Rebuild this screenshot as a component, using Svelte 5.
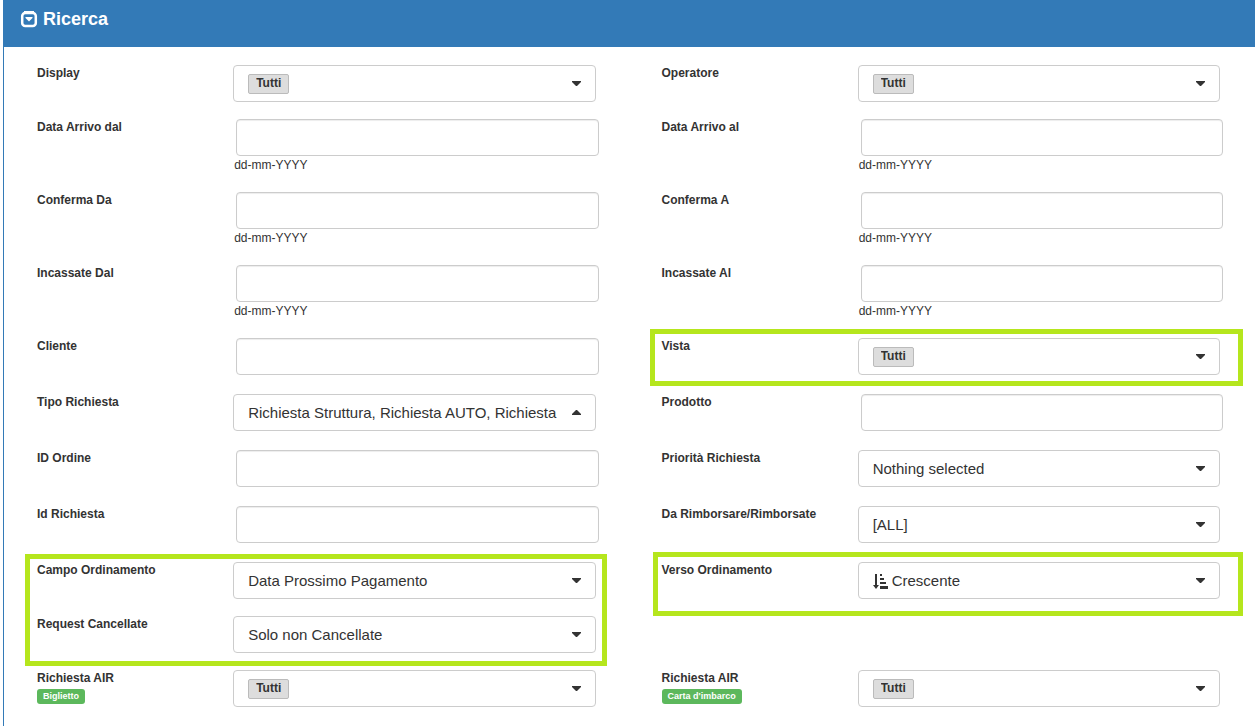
<script>
  const rows = [
    [
      { id: 'display', label: 'Display', kind: 'tag', value: 'Tutti' },
      { id: 'operatore', label: 'Operatore', kind: 'tag', value: 'Tutti' }
    ],
    [
      { id: 'arrivo-dal', label: 'Data Arrivo dal', kind: 'date' },
      { id: 'arrivo-al', label: 'Data Arrivo al', kind: 'date' }
    ],
    [
      { id: 'conferma-da', label: 'Conferma Da', kind: 'date' },
      { id: 'conferma-a', label: 'Conferma A', kind: 'date' }
    ],
    [
      { id: 'incassate-dal', label: 'Incassate Dal', kind: 'date' },
      { id: 'incassate-al', label: 'Incassate Al', kind: 'date' }
    ],
    [
      { id: 'cliente', label: 'Cliente', kind: 'text' },
      { id: 'vista', label: 'Vista', kind: 'tag', value: 'Tutti', mark: 'mark-vista' }
    ],
    [
      { id: 'tipo', label: 'Tipo Richiesta', kind: 'select', value: 'Richiesta Struttura, Richiesta AUTO, Richiesta', open: true },
      { id: 'prodotto', label: 'Prodotto', kind: 'text' }
    ],
    [
      { id: 'id-ordine', label: 'ID Ordine', kind: 'text' },
      { id: 'priorita', label: 'Priorità Richiesta', kind: 'select', value: 'Nothing selected' }
    ],
    [
      { id: 'id-richiesta', label: 'Id Richiesta', kind: 'text' },
      { id: 'rimborsi', label: 'Da Rimborsare/Rimborsate', kind: 'select', value: '[ALL]' }
    ],
    [
      { id: 'campo', label: 'Campo Ordinamento', kind: 'select', value: 'Data Prossimo Pagamento', mark: 'mark-campo' },
      { id: 'verso', label: 'Verso Ordinamento', kind: 'select', value: 'Crescente', sort: true, mark: 'mark-verso' }
    ],
    [{ id: 'cancellate', label: 'Request Cancellate', kind: 'select', value: 'Solo non Cancellate' }],
    [
      { id: 'air-biglietto', label: 'Richiesta AIR', badge: 'Biglietto', kind: 'tag', value: 'Tutti' },
      { id: 'air-carta', label: 'Richiesta AIR', badge: "Carta d'imbarco", kind: 'tag', value: 'Tutti' }
    ]
  ];
</script>

<section class="panel">
  <header>
    <svg width="18" height="18" viewBox="0 0 18 18" aria-hidden="true">
      <path d="M4 1h10v2H4z" fill="#fff" />
      <rect x="2.200" y="3" width="13.600" height="13" rx="3" fill="none" stroke="#fff" stroke-width="2.500" />
      <path d="M5.500 7h7v1L9 11.500 5.500 8z" fill="#fff" />
    </svg>
    <h1>Ricerca</h1>
  </header>

  <form>
    {#each rows as row}
      <div class="pair">
        {#each row as f}
          <div class="field">
            <label for={f.id}>
              {f.label}
              {#if f.badge}<span class="badge">{f.badge}</span>{/if}
            </label>
            <div class="control">
              {#if f.kind === 'text' || f.kind === 'date'}
                <input id={f.id} type="text" />
                {#if f.kind === 'date'}<p class="help">dd-mm-YYYY</p>{/if}
              {:else}
                <div class="box">
                  {#if f.sort}
                    <svg class="sort" width="15" height="16" viewBox="0 0 15 16" aria-hidden="true">
                      <path d="M2 1h2v11h2L3 16 0 12h2z M7 1h2v2H7z M7 5h4v2H7z M7 9h6v2H7z M7 13h8v3H7z" fill="#333" />
                    </svg>
                  {/if}
                  <select id={f.id} class:tag={f.kind === 'tag'}>
                    <option>{f.value}</option>
                  </select>
                  <svg class="caret" width="9" height="5" viewBox="0 0 9 5" aria-hidden="true">
                    <path d={f.open ? 'M0 5V4l4-4h1l4 4v1z' : 'M0 0h9v1L5 5H4L0 1z'} fill="#333" />
                  </svg>
                </div>
              {/if}
            </div>
            {#if f.mark}<span class="mark {f.mark}"></span>{/if}
          </div>
        {/each}
      </div>
    {/each}
  </form>
</section>

<style>
  :global(body) {
    margin: 0;
    background: #fff;
    overflow-x: hidden;
  }
  .panel {
    margin-left: 3px;
    border-left: 1px solid #337ab7;
    font: 12px/19px "Liberation Sans", Arial, sans-serif;
    color: #333;
  }
  header {
    display: flex;
    align-items: center;
    gap: 5px;
    height: 37px;
    padding: 0 16px 10px;
    background: #337ab7;
    color: #fff;
  }
  h1 {
    margin: 0;
    font-size: 18px;
    line-height: 20px;
  }
  form {
    display: flex;
    flex-direction: column;
    gap: 17px;
    padding: 18px 20px 19px 18px;
  }
  .pair {
    display: grid;
    grid-template-columns: 1fr 1fr;
    gap: 36px;
  }
  .field {
    position: relative;
    display: grid;
    grid-template-columns: 1fr 2fr;
    align-items: start;
  }
  label {
    padding: 0 0 0 15px;
    font-weight: bold;
    line-height: 16px;
  }
  .badge {
    display: table;
    margin-top: 3px;
    padding: 0 6px;
    border-radius: 3px;
    background: #5cb85c;
    color: #fff;
    font-size: 9px;
    line-height: 15px;
  }
  .control {
    min-width: 0;
    padding: 0 15px;
  }
  input {
    display: block;
    box-sizing: border-box;
    width: 100%;
    height: 37px;
    margin: 0 0 2px 3px;
    padding: 6px 12px;
    border: 1px solid #ccc;
    border-radius: 4px;
    box-shadow: inset 0 1px 1px rgba(0, 0, 0, 0.075);
    background: #fff;
    font: inherit;
    color: inherit;
  }
  .help {
    margin: -2px 0 0 1px;
  }
  .box {
    display: flex;
    align-items: center;
    gap: 4px;
    box-sizing: border-box;
    height: 37px;
    padding: 0 14px;
    border: 1px solid #ccc;
    border-radius: 4px;
  }
  select {
    appearance: none;
    flex: 1;
    min-width: 0;
    margin: 0;
    padding: 0;
    border: 0;
    background: none;
    color: #333;
    font: 15px/20px "Liberation Sans", Arial, sans-serif;
  }
  select.tag {
    flex: none;
    height: 20px;
    padding: 0 6px 2px 7px;
    border: 1px solid #bbb;
    border-radius: 2px;
    background: #ddd;
    font-size: 12px;
    line-height: 16px;
    font-weight: bold;
  }
  .sort {
    flex: none;
  }
  .caret {
    flex: none;
    margin-left: auto;
  }
  .mark {
    position: absolute;
    border: 5px solid #b5e61d;
    pointer-events: none;
  }
  .mark-vista {
    inset: -9px -8px -9px 3px;
  }
  .mark-campo {
    inset: -8px 4px -67px 3px;
  }
  .mark-verso {
    inset: -10px -8px -17px 6px;
  }
</style>
